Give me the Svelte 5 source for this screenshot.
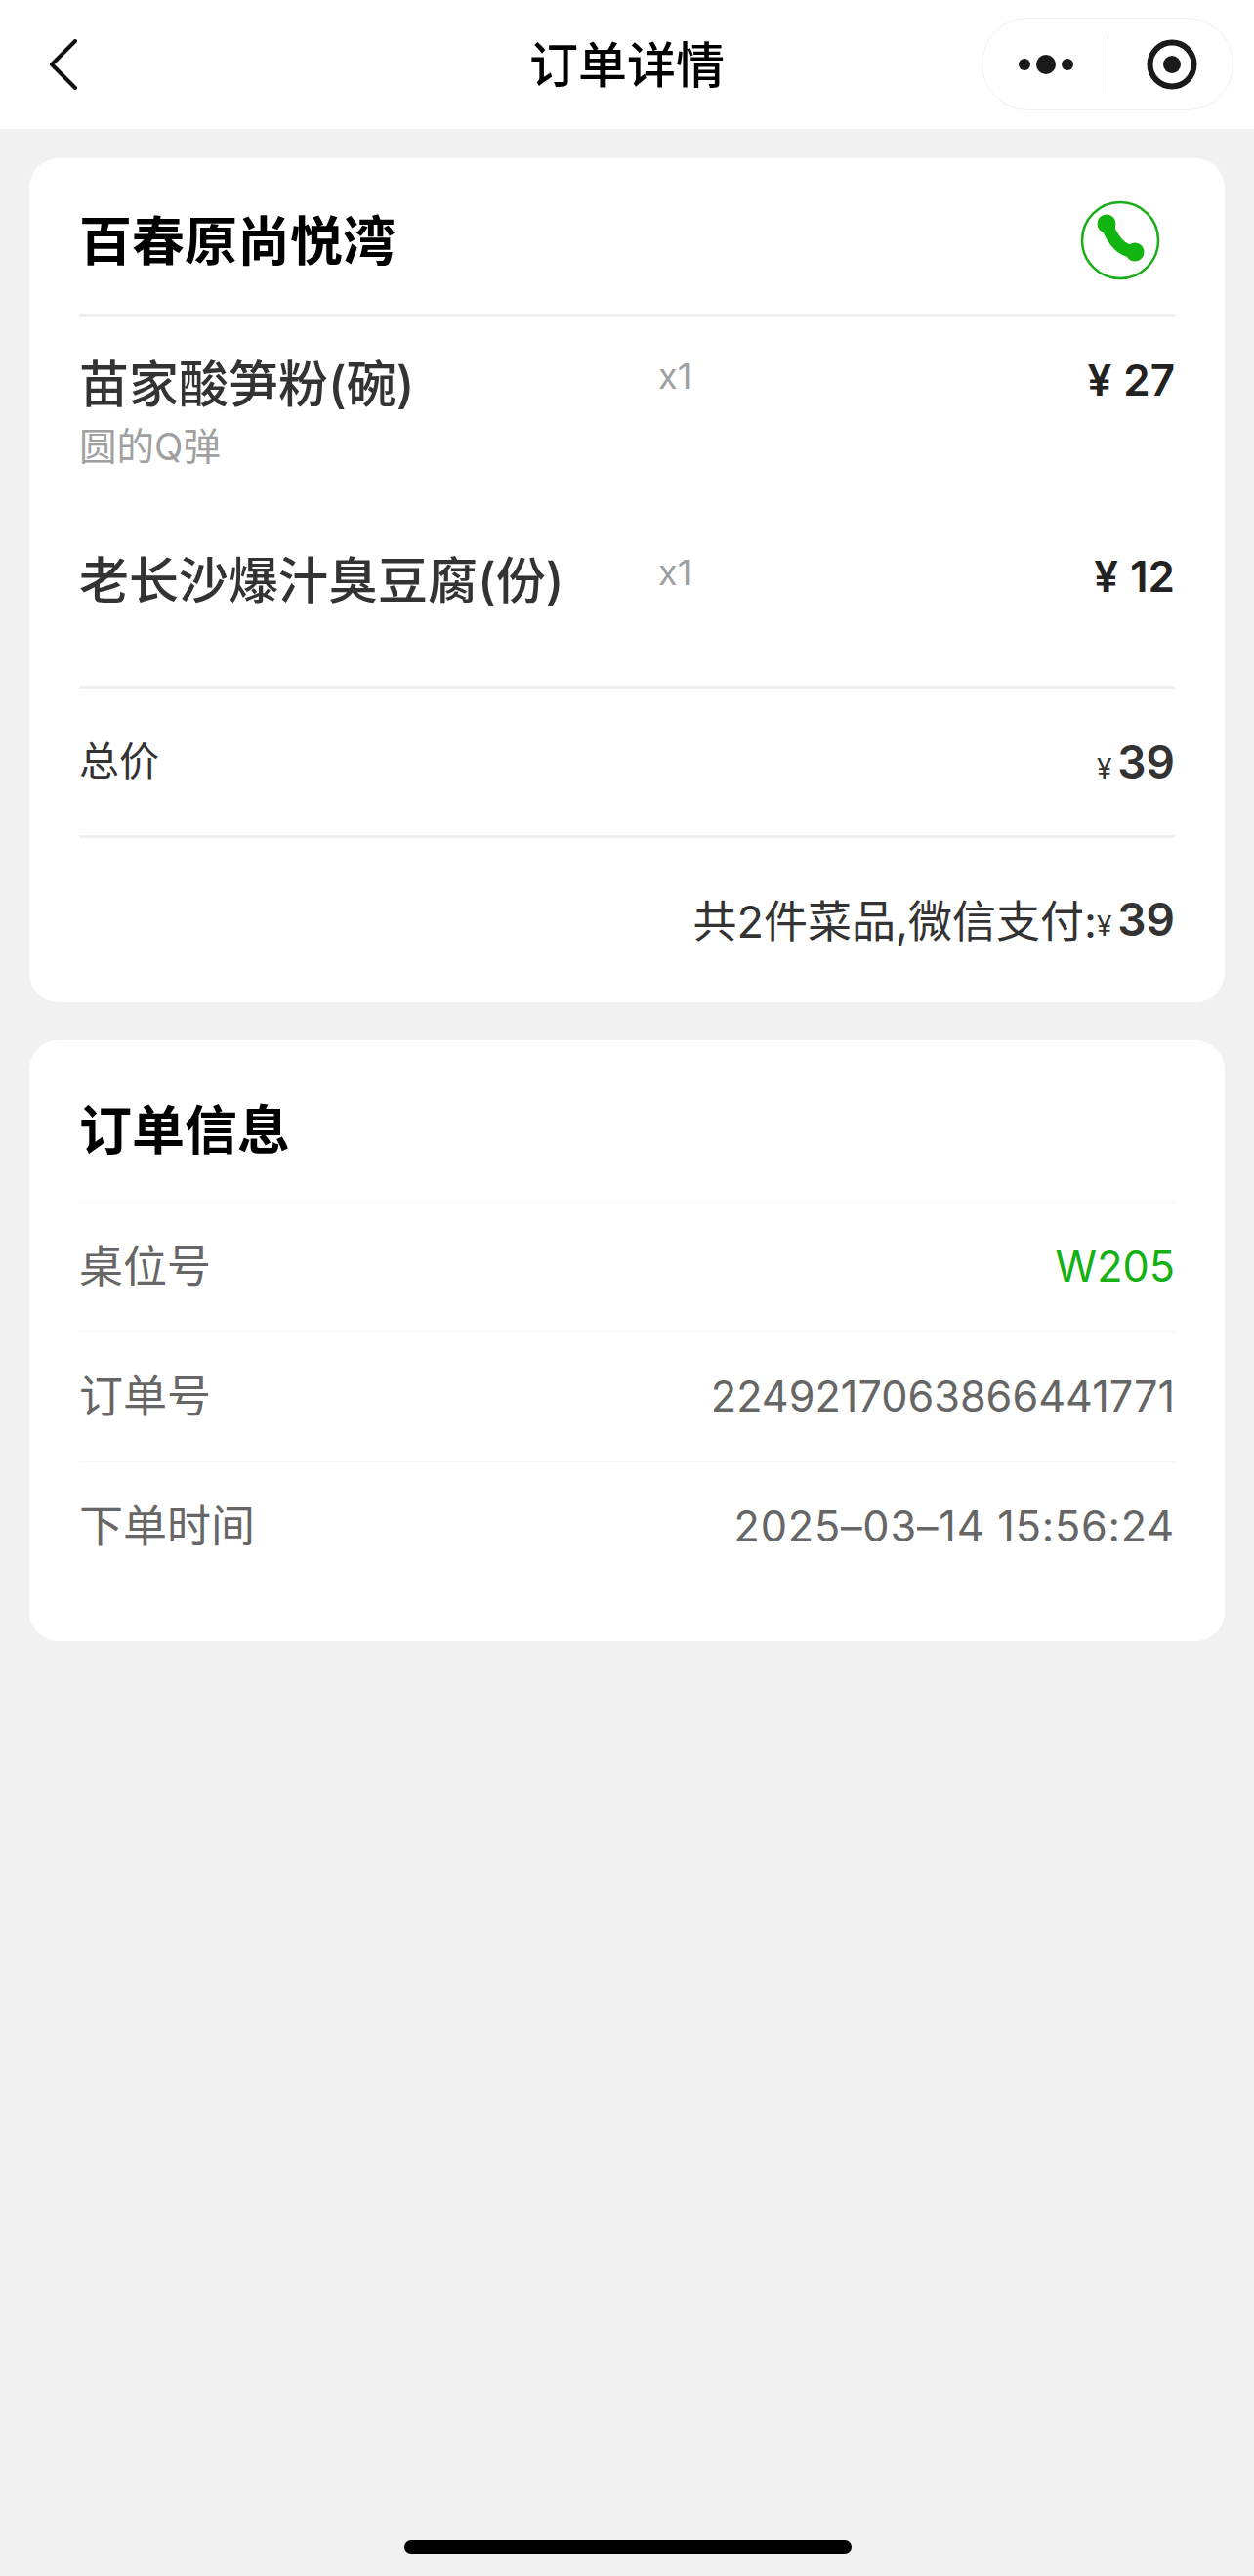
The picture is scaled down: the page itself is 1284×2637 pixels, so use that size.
<script lang="ts">
	const items = [
		{ name: '苗家酸笋粉(碗)', note: '圆的Q弹', qty: 'x1', price: '27' },
		{ name: '老长沙爆汁臭豆腐(份)', note: '', qty: 'x1', price: '12' }
	];

	const info = [
		{ label: '桌位号', value: 'W205', accent: true, date: false },
		{ label: '订单号', value: '2249217063866441771', accent: false, date: false },
		{ label: '下单时间', value: '2025–03–14 15:56:24', accent: false, date: true }
	];
</script>

<div class="page">
	<header class="nav">
		<button class="back" aria-label="返回">
			<svg width="30" height="52" viewBox="0 0 30 52" fill="none" stroke="#111" stroke-width="4" stroke-linecap="round" stroke-linejoin="round">
				<polyline points="27,2 3,26 27,50" />
			</svg>
		</button>
		<h1>订单详情</h1>
		<div class="capsule">
			<svg class="more" width="68" height="22" viewBox="0 0 68 22" fill="#1a1a1a">
				<circle cx="7" cy="11" r="6" />
				<circle cx="29" cy="11" r="10" />
				<circle cx="51" cy="11" r="6" />
			</svg>
			<span class="sep"></span>
			<svg class="target" width="52" height="52" viewBox="0 0 52 52">
				<circle cx="26" cy="26" r="22.5" fill="none" stroke="#1a1a1a" stroke-width="6" />
				<circle cx="26" cy="26" r="9" fill="#1a1a1a" />
			</svg>
		</div>
	</header>

	<main class="content">
		<section class="card">
			<div class="shop">
				<h2>百春原尚悦湾</h2>
				<svg class="phone" width="82" height="82" viewBox="0 0 82 82">
					<circle cx="41" cy="41" r="39" fill="none" stroke="#1aad19" stroke-width="2.5" />
					<path d="M27 24 Q36.5 51.5 56 53" fill="none" stroke="#12b50f" stroke-width="13" stroke-linecap="round" />
					<circle cx="27" cy="24" r="9.5" fill="#12b50f" />
					<circle cx="56" cy="53" r="9.5" fill="#12b50f" />
				</svg>
			</div>

			<div class="items">
				{#each items as item}
					<div class="item">
						<div class="item-main">
							<div class="item-name">{item.name}</div>
							{#if item.note}
								<div class="item-note">{item.note}</div>
							{/if}
						</div>
						<div class="item-qty">{item.qty}</div>
						<div class="item-price"><span class="yen">¥</span>{item.price}</div>
					</div>
				{/each}
			</div>

			<div class="total">
				<span class="total-label">总价</span>
				<span class="amount"><small>¥</small>39</span>
			</div>

			<div class="paid">
				<span>共2件菜品,微信支付:</span>
				<span class="amount"><small>¥</small>39</span>
			</div>
		</section>

		<section class="card">
			<h2 class="info-title">订单信息</h2>
			{#each info as row}
				<div class="info-row">
					<span class="info-label">{row.label}</span>
					<span class="info-value" class:accent={row.accent} class:date={row.date}>{row.value}</span>
				</div>
			{/each}
		</section>
	</main>

	<div class="home-bar"></div>
</div>

<style>
	:global(body) {
		margin: 0;
		background: #f1f1f1;
	}

	.page {
		position: relative;
		height: 2637px;
		background: #f1f1f1;
		font-family: Inter, 'Noto Sans CJK SC', sans-serif;
		overflow: hidden;
	}

	.nav {
		height: 132px;
		background: #fff;
		display: grid;
		grid-template-columns: 1fr auto 1fr;
		align-items: start;
	}

	.back {
		border: 0;
		padding: 0;
		background: none;
		margin: 40px 0 0 50px;
		justify-self: start;
		line-height: 0;
	}

	h1 {
		margin: 30px 0 0;
		font-size: 50px;
		line-height: 74px;
		font-weight: 500;
		color: #000;
	}

	.capsule {
		justify-self: end;
		margin: 18px 21px 0 0;
		width: 258px;
		height: 95px;
		box-sizing: border-box;
		border: 1px solid #f0f0f0;
		border-radius: 48px;
		display: flex;
		align-items: center;
	}

	.more {
		margin-left: 36px;
	}

	.sep {
		width: 1px;
		height: 60px;
		background: #e8e8e8;
		margin-left: 24px;
	}

	.target {
		margin-left: 39px;
	}

	.content {
		padding: 30px 30px 0;
		display: flex;
		flex-direction: column;
		gap: 39px;
	}

	.card {
		background: #fff;
		border-radius: 30px;
		padding: 0 51px;
	}

	h2 {
		margin: 0;
		font-size: 54px;
		font-weight: 700;
		color: #000;
	}

	.shop {
		height: 162px;
		box-sizing: border-box;
		padding-top: 4px;
		display: flex;
		align-items: center;
		justify-content: space-between;
		border-bottom: 3px solid #efefef;
	}

	.phone {
		margin: 4px 15px 0 0;
	}

	.items {
		height: 381px;
		box-sizing: border-box;
		padding-top: 32px;
		border-bottom: 3px solid #efefef;
	}

	.item {
		display: flex;
		align-items: flex-start;
		height: 201px;
	}

	.item-main {
		width: 593px;
	}

	.item-name {
		padding-top: 2px;
		font-size: 51px;
		line-height: 72px;
		font-weight: 500;
		color: #333;
	}

	.item-note {
		font-size: 38.5px;
		line-height: 54px;
		color: #a0a0a0;
	}

	.item-qty {
		font-size: 36px;
		line-height: 58px;
		color: #a0a0a0;
	}

	.item-price {
		margin-left: auto;
		font-size: 44px;
		line-height: 66px;
		font-weight: 600;
		color: #222;
	}

	.yen {
		margin-right: 12px;
	}

	.total {
		height: 150px;
		display: flex;
		align-items: center;
		justify-content: space-between;
		font-size: 41px;
		color: #333;
		border-bottom: 3px solid #efefef;
	}

	.total-label {
		margin-bottom: 8px;
	}

	.amount {
		font-size: 46px;
		font-weight: 600;
		color: #333;
	}

	.amount small {
		font-size: 28px;
		font-weight: 400;
		margin-right: 6px;
	}

	.paid {
		height: 168px;
		box-sizing: border-box;
		padding-bottom: 3px;
		display: flex;
		align-items: center;
		justify-content: flex-end;
		font-size: 45px;
		color: #333;
	}

	.info-title {
		height: 165px;
		line-height: 185px;
		font-size: 54px;
	}

	.info-row {
		height: 133px;
		box-sizing: border-box;
		border-top: 1px solid #f5f5f5;
		display: flex;
		align-items: center;
		justify-content: space-between;
		font-size: 45px;
		color: #666;
	}

	.info-row:last-child {
		height: 184px;
		padding-bottom: 51px;
	}

	.info-label {
		margin-bottom: 7px;
	}

	.info-value {
		font-size: 43.2px;
		margin-bottom: 3px;
	}

	.info-value.date {
		letter-spacing: 0.8px;
	}

	.accent {
		color: #14b014;
	}

	.home-bar {
		position: absolute;
		left: 414px;
		bottom: 23px;
		width: 458px;
		height: 14px;
		border-radius: 7px;
		background: #000;
	}
</style>
